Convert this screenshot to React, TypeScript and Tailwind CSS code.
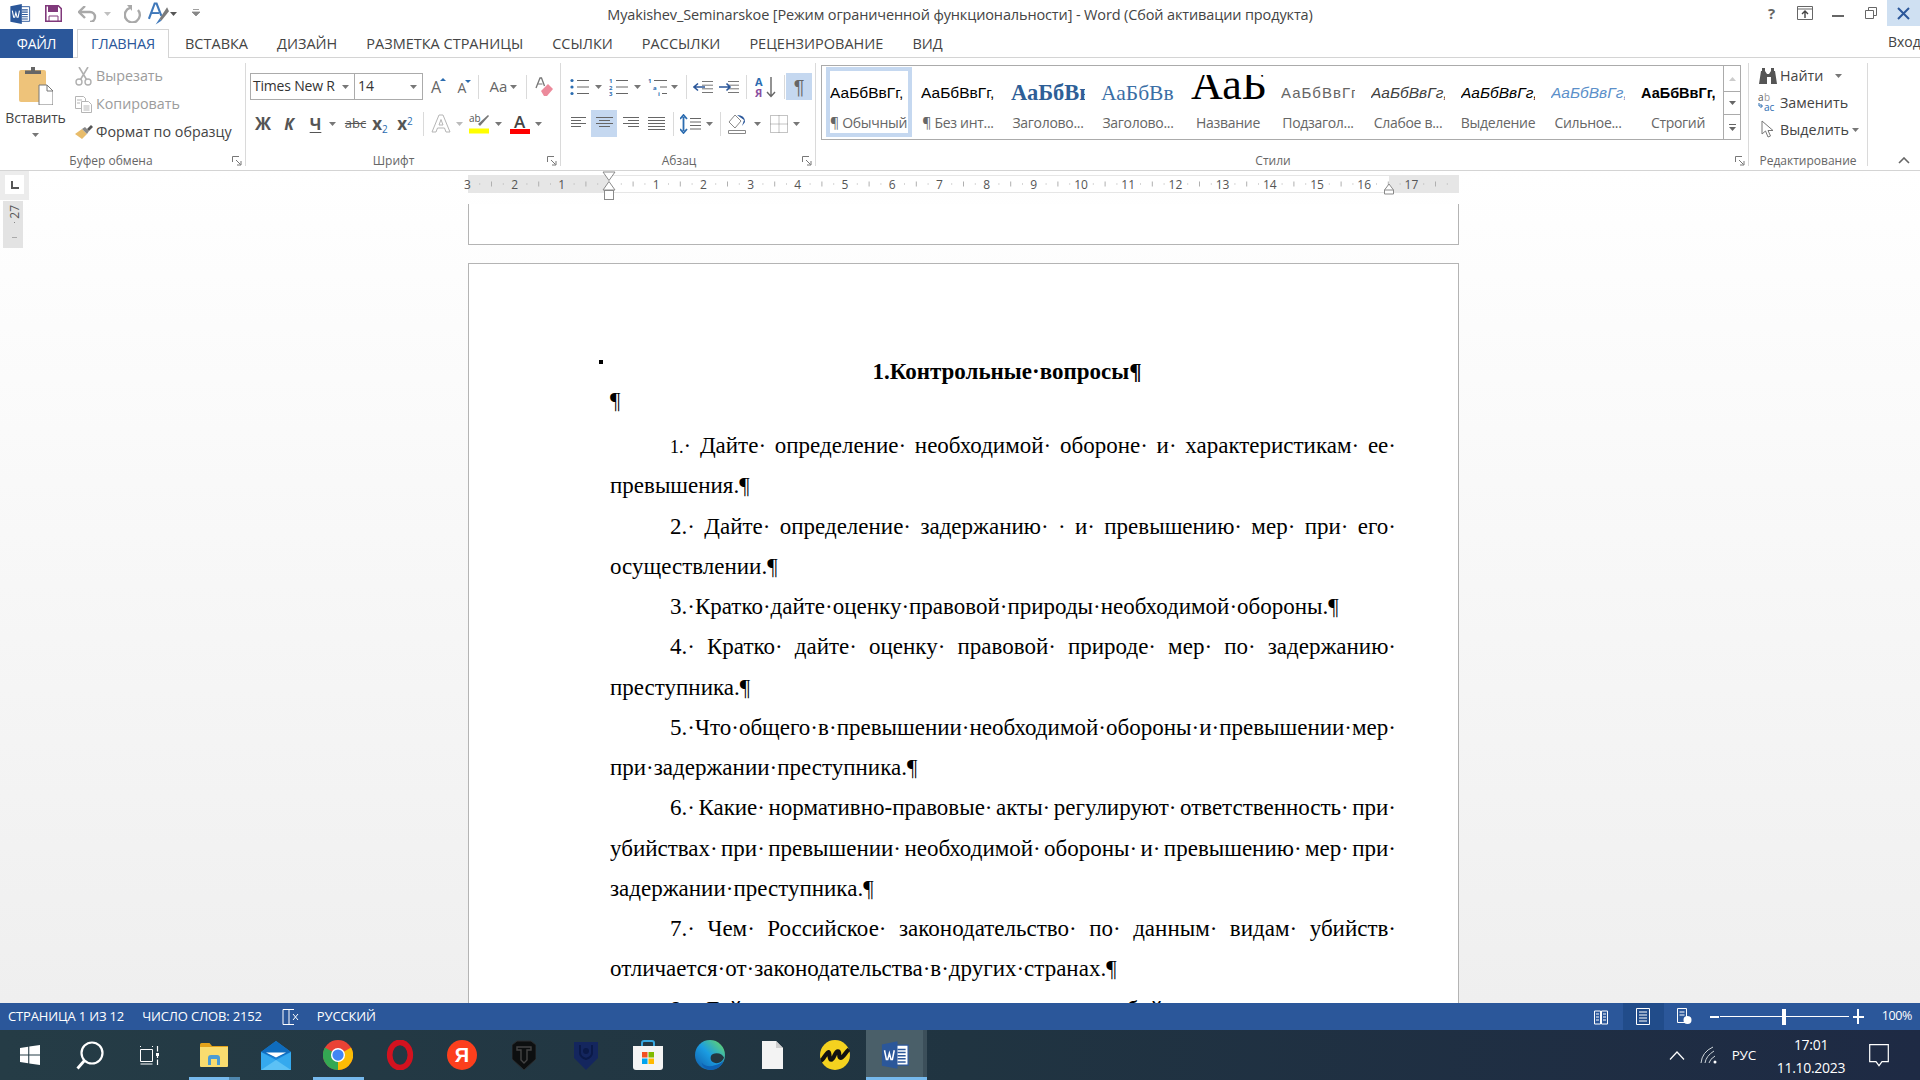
import React from "react";

const sans = "font-['Open_Sans',sans-serif]";

const Caret = ({ c = "#777" }: { c?: string }) => (
  <svg width="7" height="4" viewBox="0 0 7 4" className="shrink-0"><path d="M0 0h7L3.5 4z" fill={c} /></svg>
);
const Sep = ({ w }: { w: number }) => (
  <div className="flex justify-center h-full" style={{ width: w }}><div className="w-px h-[24px] bg-[#dadada] self-center" /></div>
);
const Btn = ({ w, children, on, gap = 6 }: { w: number; children: React.ReactNode; on?: boolean; gap?: number }) => (
  <div className={"flex items-center justify-center h-[27px] shrink-0 " + (on ? "bg-[#c5d8f0]" : "")} style={{ width: w, gap }}>{children}</div>
);
const Launcher = () => (
  <svg width="10" height="10" viewBox="0 0 10 10" className="absolute right-[3px] top-[1px]"><path d="M.5 6V.5H7M4 4l4.5 4.5M9 5v4H5" stroke="#777" fill="none" /></svg>
);
const Label = ({ children, launcher = true }: { children: React.ReactNode; launcher?: boolean }) => (
  <div className={"relative top-[1px] mt-auto h-[12px] leading-[12px] text-center text-[12px] text-[#666] whitespace-nowrap " + (launcher ? "pr-[23px]" : "")}>
    {children}
    {launcher && <Launcher />}
  </div>
);

const WordLogo = ({ s = 22 }: { s?: number }) => (
  <svg width={s} height={s} viewBox="0 0 24 24">
    <path d="M11 4h11.5v16H11z" fill="#fff" stroke="#2b579a" />
    <path d="M14 7.5h6.5M14 10h6.5M14 12.5h6.5M14 15h6.5M14 17.5h6.5" stroke="#2b579a" strokeWidth="1.2" />
    <path d="M1.5 3.5 14 1v22L1.5 20.5z" fill="#2b579a" />
    <path d="M3.6 8.2l1.5 7.4h1.1l1.3-5 1.3 5h1.1l1.5-7.4" stroke="#fff" strokeWidth="1.2" fill="none" />
  </svg>
);

const IconList = {
  Bullets: () => (
    <svg width="20" height="18" viewBox="0 0 20 18"><circle cx="2" cy="2.5" r="1.6" fill="#2b6cb0" /><circle cx="2" cy="9" r="1.6" fill="#2b6cb0" /><circle cx="2" cy="15.5" r="1.6" fill="#2b6cb0" /><path d="M7 2.5h12M7 9h12M7 15.5h12" stroke="#666" /></svg>
  ),
  Numbers: () => (
    <svg width="20" height="18" viewBox="0 0 20 18"><text x="0" y="5" fontSize="6" fill="#2b6cb0" fontWeight="700">1</text><text x="0" y="11.5" fontSize="6" fill="#2b6cb0" fontWeight="700">2</text><text x="0" y="18" fontSize="6" fill="#2b6cb0" fontWeight="700">3</text><path d="M7 2.5h12M7 9h12M7 15.5h12" stroke="#666" /></svg>
  ),
  Multi: () => (
    <svg width="20" height="18" viewBox="0 0 20 18"><text x="0" y="5" fontSize="6" fill="#2b6cb0" fontWeight="700">1</text><text x="5" y="11.5" fontSize="6" fill="#2b6cb0" fontWeight="700">a</text><text x="10" y="18" fontSize="6" fill="#2b6cb0" fontWeight="700">i</text><path d="M6 2.5h13M12 9h7M14 15.5h5" stroke="#666" /></svg>
  ),
};

const IndentIcon = ({ dir }: { dir: "l" | "r" }) => (
  <svg width="20" height="12" viewBox="0 0 20 12">
    <path d="M9 .5h11M9 4.2h11M9 7.8h11M9 11.5h11" stroke="#777" />
    {dir === "l" ? <path d="M1 6h11M5 2.5 1 6l4 3.5" stroke="#2b579a" strokeWidth="1.6" fill="none" /> : <path d="M0 6h11M7.5 2.5 11 6 7.5 9.5" stroke="#2b579a" strokeWidth="1.6" fill="none" />}
  </svg>
);
const Align = ({ rows }: { rows: [number, number][] }) => (
  <svg width="17" height="13" viewBox="0 0 17 13">
    {rows.map(([x, w], i) => <path key={i} d={`M${x} ${i * 3 + .5}h${w}`} stroke="#666" />)}
  </svg>
);

const Tab = ({ children }: { children: React.ReactNode }) => (
  <div className="px-[14.5px] h-[29px] leading-[29px] text-[#444] text-[14.5px] whitespace-nowrap">{children}</div>
);

const StyleItem = ({ sample, label, cls, sel, big }: { sample: string; label: string; cls: string; sel?: boolean; big?: boolean }) => (
  <div className="w-[90px] shrink-0">
    <div className={"h-[70px] border-[4px] mt-[1px] w-[86px] " + (sel ? "ml-[4px] border-[#c5d8f0]" : "ml-[3px] border-transparent")}>
      <div className={sel ? "pr-[4px]" : ""}>
        <div className={"w-[74px] mx-auto overflow-hidden whitespace-nowrap " + (big ? "h-[40px] mt-[4px] leading-[20px] text-center " : "h-[44px] leading-[44px] ") + cls}>{sample}</div>
        <div className="h-[16px] leading-[16px] text-center text-[14px] tracking-[-0.3px] text-[#666] whitespace-nowrap">{label}</div>
      </div>
    </div>
  </div>
);

const Row3 = ({ icon, text, color = "#444", extra, tight }: { icon: React.ReactNode; text: string; color?: string; extra?: React.ReactNode; tight?: boolean }) => (
  <div className={"flex items-center " + (tight ? "h-[27px]" : "h-[28px]")}>
    <div className="w-[25px] flex justify-center shrink-0">{icon}</div>
    <span className="text-[14.3px] whitespace-nowrap" style={{ color }}>{text}</span>
    {extra}
  </div>
);

const Ruler = () => {
  const cm = 47.2, o = 141;
  const nums: React.ReactNode[] = [];
  for (let i = -3; i <= 17; i++) {
    const x = o + i * cm;
    if (i !== 0) nums.push(<text key={"n" + i} x={x} y={13.5} fontSize="12" textAnchor="middle" fill="#555" fontFamily="Open Sans">{Math.abs(i)}</text>);
    for (const [f, h] of [[.25, 1], [.5, 5], [.75, 1]] as const) {
      const tx = x + f * cm;
      if (tx < 991) nums.push(<rect key={"t" + i + f} x={tx} y={9 - h / 2} width="1" height={h} fill="#b0b0b0" />);
    }
  }
  return (
    <svg width="991" height="18" viewBox="0 0 991 18" className="overflow-visible block">
      <rect width="991" height="18" fill="#fff" />
      <path d="M0 .5h991M0 17.5h991" stroke="#e6e6e6" />
      <rect width="141" height="18" fill="#e6e6e6" />
      <rect x="921" width="70" height="18" fill="#e6e6e6" />
      {nums}
      <path d="M135 -3h12l-6 8.5z M135 15h12l-6 -8.5z" fill="#fff" stroke="#8a8a8a" />
      <rect x="136.5" y="15.5" width="9" height="9" fill="#fff" stroke="#8a8a8a" />
      <path d="M916.5 19v-4l4.5-6 4.5 6v4z" fill="#fff" stroke="#8a8a8a" />
      <path d="M916.5 15h9" stroke="#8a8a8a" />
    </svg>
  );
};

type Ln = { t: string; j?: boolean; ind?: boolean; num?: string };
const doc: Ln[] = [
  { t: "· Дайте· определение· необходимой· обороне· и· характеристикам· ее·", j: true, ind: true, num: "1." },
  { t: "превышения.¶" },
  { t: "2.· Дайте· определение· задержанию· · и· превышению· мер· при· его·", j: true, ind: true },
  { t: "осуществлении.¶" },
  { t: "3.·Кратко·дайте·оценку·правовой·природы·необходимой·обороны.¶", ind: true },
  { t: "4.· Кратко· дайте· оценку· правовой· природе· мер· по· задержанию·", j: true, ind: true },
  { t: "преступника.¶" },
  { t: "5.· Что· общего· в· превышении· необходимой· обороны· и· превышении· мер·", j: true, ind: true },
  { t: "при·задержании·преступника.¶" },
  { t: "6.· Какие· нормативно-правовые· акты· регулируют· ответственность· при·", j: true, ind: true },
  { t: "убийствах· при· превышении· необходимой· обороны· и· превышению· мер· при·", j: true },
  { t: "задержании·преступника.¶" },
  { t: "7.· Чем· Российское· законодательство· по· данным· видам· убийств·", j: true, ind: true },
  { t: "отличается·от·законодательства·в·других·странах.¶" },
  { t: "8.· Дайте· сравнительную· характеристику· убийств· при· превышении·", j: true, ind: true },
];

const Circle = ({ children, s = 32 }: { children: React.ReactNode; s?: number }) => (
  <svg width={s} height={s} viewBox="0 0 32 32">{children}</svg>
);

const TaskIcons: { w: number; el: React.ReactNode; line?: "a" | "b" | "c" }[] = [
  { w: 60, el: <svg width="20" height="20" viewBox="0 0 20 20"><path d="M0 3l8.2-1.2v7.8H0zM9.3 1.6 20 0v9.6H9.3zM0 10.6h8.2v7.7L0 17.1zM9.3 10.6H20V20L9.3 18.5z" fill="#fff" /></svg> },
  { w: 60, el: <svg width="28" height="29" viewBox="0 0 28 29"><circle cx="16" cy="12" r="10.5" stroke="#fff" strokeWidth="2.2" fill="none" /><path d="M8.5 19.5 1.5 27.5" stroke="#fff" strokeWidth="2.8" /></svg> },
  { w: 63, el: <svg width="20" height="19" viewBox="0 0 20 19" className="mr-[3px]"><path d="M.5 3.5h12v12H.5zM.5 0v1M12.5 0v1M.5 18h12" stroke="#fff" fill="none" /><path d="M17.5 0v5.5M17.5 7v5M17.5 13.5V19" stroke="#fff" strokeWidth="1.2" /><rect x="16" y="7" width="3" height="3" fill="#fff" /></svg> },
  { w: 62, line: "a", el: <svg width="28" height="24" viewBox="0 0 28 24"><path d="M0 1.5Q0 0 1.5 0h8L12 3h16v2H0z" fill="#e3a21a" /><path d="M0 4h28v19a1 1 0 0 1-1 1H1a1 1 0 0 1-1-1z" fill="#f9dc6f" /><path d="M8 22v-7a3 3 0 0 1 3-3h6a3 3 0 0 1 3 3v7h-3v-6h-6v6z" fill="#4a9bd4" /></svg> },
  { w: 62, el: <svg width="30" height="29" viewBox="0 0 30 29"><path d="M15 0 30 11v18H0V11z" fill="#1a84d6" /><path d="M15 0 30 11 15 17 0 11z" fill="#0f6cbd" /><path d="M5 11.5h20L15 16.5z" fill="#fff" /><path d="M0 11 15 19 30 11v18H0z" fill="#35a9ee" /><path d="M0 29 15 19l15 10z" fill="#5cc1f5" /></svg> },
  { w: 62, line: "b", el: <Circle s={30}><circle cx="16" cy="16" r="16" fill="#e94235" /><path d="M16 16 29.9 8A16 16 0 0 1 16 32z" fill="#fbbc05" /><path d="M16 16V32A16 16 0 0 1 2.1 8z" fill="#34a853" /><circle cx="16" cy="16" r="7.5" fill="#fff" /><circle cx="16" cy="16" r="6" fill="#4285f4" /></Circle> },
  { w: 62, el: <Circle s={30}><ellipse cx="16" cy="16" rx="11" ry="13.5" fill="none" stroke="#d3121f" strokeWidth="6" /></Circle> },
  { w: 62, el: <div className="w-[30px] h-[30px] rounded-full bg-[#fc3f1d] flex items-center justify-center text-white font-bold text-[20px] font-['Liberation_Sans',sans-serif]">Я</div> },
  { w: 62, el: <svg width="24" height="30" viewBox="0 0 24 30"><path d="M5 1h14l5 4v14l-12 11L0 19V5z" fill="#0d0f10" stroke="#2c2f31" /><path d="M5 7h14v3h-4v10l-3 3-3-3V10H5z" fill="none" stroke="#444" strokeWidth="1.4" /></svg> },
  { w: 62, el: <svg width="24" height="30" viewBox="0 0 24 30"><path d="M0 2h24v16L12 30 0 18z" fill="#14265e" /><path d="M6 5v8q0 4 6 6 6-2 6-6V5" stroke="#0b1a48" strokeWidth="2" fill="none" /><circle cx="12" cy="11" r="3" fill="#0b1a48" /></svg> },
  { w: 62, el: <svg width="30" height="30" viewBox="0 0 30 30"><path d="M9 7V3a2 2 0 0 1 2-2h8a2 2 0 0 1 2 2v4" stroke="#37a7e0" strokeWidth="2" fill="none" /><path d="M0 6h30v21a3 3 0 0 1-3 3H3a3 3 0 0 1-3-3z" fill="#f4f4f4" /><path d="M9 12h5.5v5.5H9z" fill="#f25022" /><path d="M15.5 12H21v5.5h-5.5z" fill="#7fba00" /><path d="M9 18.5h5.5V24H9z" fill="#00a4ef" /><path d="M15.5 18.5H21V24h-5.5z" fill="#ffb900" /></svg> },
  { w: 62, el: <Circle s={30}><defs><linearGradient id="edg" x1="0" y1="1" x2="1" y2="0"><stop offset="0" stopColor="#0f5aa8" /><stop offset=".5" stopColor="#1b9de2" /><stop offset="1" stopColor="#6fdc5a" /></linearGradient></defs><circle cx="16" cy="16" r="16" fill="url(#edg)" /><path d="M31 19c-2 5-7 7-11 5-3-1-4-4-3-7 1-2 3-3 6-3 4 0 7 2 8 5z" fill="#24363f" /><path d="M31 21c-2 6-7 11-14 11-5 0-9-3-10-8 3 4 9 5 14 3 4-1 8-3 10-6z" fill="#0f62b4" /></Circle> },
  { w: 62, el: <svg width="21" height="28" viewBox="0 0 21 28"><path d="M0 0h14l7 7v21H0z" fill="#f3f3f3" /><path d="M14 0l7 7h-7z" fill="#cfcfcf" /></svg> },
  { w: 63, el: <Circle s={30}><circle cx="16" cy="16" r="16" fill="#f4d21f" /><path d="M1 22c3-1 5-8 8-9 2 0 0 8 3 8s4-9 7-9 0 7 3 7 5-6 9-9" fill="none" stroke="#111" strokeWidth="4.5" /></Circle> },
];

export default function App() {
  return (
    <div className={"w-[1920px] h-[1080px] flex flex-col overflow-hidden bg-white " + sans}>
      {/* title bar */}
      <div className="h-[29px] grid grid-cols-[1fr_auto_1fr] shrink-0">
        <div className="flex items-center h-[27px] pl-[9px]">
          <WordLogo />
          <svg width="17" height="17" viewBox="0 0 17 17" className="ml-[14px]"><path d="M.8.8h12.5l3 3v12.4H.8z" fill="none" stroke="#80397b" strokeWidth="1.6" /><path d="M3 1h10v6H3z" fill="#80397b" /><path d="M4 11h9v5H4z" fill="#fff" stroke="#80397b" /></svg>
          <svg width="20" height="16" viewBox="0 0 20 16" className="ml-[16px]"><path d="M2 6h10a5 5 0 0 1 0 10" stroke="#a9a9a9" strokeWidth="2.4" fill="none" /><path d="M7 0 1 6l6 6" stroke="#a9a9a9" strokeWidth="2.4" fill="none" /></svg>
          <div className="ml-[6px]"><Caret c="#c0c0c0" /></div>
          <svg width="18" height="18" viewBox="0 0 18 18" className="ml-[13px]"><path d="M6 2.8A7.5 7.5 0 1 0 14 5" stroke="#a9a9a9" strokeWidth="2.4" fill="none" /><path d="M3 0h5v6z" fill="#a9a9a9" /></svg>
          <svg width="21" height="24" viewBox="0 0 22 24" className="ml-[6px]"><path d="M1 17 7 1h2l5 13" stroke="#3f78ba" strokeWidth="2.2" fill="none" /><path d="M3.5 11h8" stroke="#3f78ba" strokeWidth="2" /><path d="M20 5l-8 12 2 2 8-10z" fill="#7a7a7a" /><path d="M12 17l-4 6 6-4z" fill="#3f78ba" /></svg>
          <div className="ml-[1px]"><Caret c="#555" /></div>
          <svg width="8" height="9" viewBox="0 0 8 9" className="ml-[15px]"><path d="M1 .5h6M0 3h8l-4 4z" stroke="#888" strokeWidth=".8" fill="#888" /></svg>
        </div>
        <div className="h-[29px] leading-[29px] text-[14.5px] tracking-[-0.13px] text-[#444] whitespace-nowrap">Myakishev_Seminarskoe [Режим ограниченной функциональности] - Word (Сбой активации продукта)</div>
        <div className="flex justify-end items-start">
          <div className="w-[33px] h-[26px] leading-[26px] text-center text-[15px] font-bold text-[#666]">?</div>
          <div className="w-[33px] h-[26px] flex items-center justify-center"><svg width="16" height="14" viewBox="0 0 16 14"><path d="M.5.5h15v13H.5zM.5 3h15" stroke="#666" fill="none" /><path d="M8 12V5M5 8l3-3 3 3" stroke="#444" strokeWidth="1.4" fill="none" /></svg></div>
          <div className="w-[33px] h-[26px] flex items-center justify-center"><div className="w-[12px] h-[2px] bg-[#666] mt-[6px]" /></div>
          <div className="w-[33px] h-[26px] flex items-center justify-center"><svg width="12" height="12" viewBox="0 0 12 12"><path d="M3.5 3V.5h8v8H9M.5 3.5h8v8h-8z" stroke="#666" fill="none" /></svg></div>
          <div className="w-[33px] h-[26px] bg-[#cfe0f2] flex items-center justify-center"><svg width="13" height="13" viewBox="0 0 13 13"><path d="M1 1l11 11M12 1 1 12" stroke="#2b579a" strokeWidth="2" /></svg></div>
        </div>
      </div>

      {/* tabs */}
      <div className="h-[29px] flex border-b border-[#d4d4d4] shrink-0 relative">
        <div className="w-[73px] h-[29px] bg-[#2b579a] text-white text-[14px] leading-[29px] text-center tracking-[-0.3px]">ФАЙЛ</div>
        <div className="ml-[4px] w-[92px] h-[29px] border border-b-0 border-[#d4d4d4] bg-white text-[#2b579a] text-[14.5px] leading-[27px] text-center tracking-[-0.2px] z-10">ГЛАВНАЯ</div>
        <div className="flex ml-[1.5px]">
          <Tab>ВСТАВКА</Tab>
          <Tab>ДИЗАЙН</Tab>
          <Tab>РАЗМЕТКА СТРАНИЦЫ</Tab>
          <Tab>ССЫЛКИ</Tab>
          <Tab>РАССЫЛКИ</Tab>
          <Tab>РЕЦЕНЗИРОВАНИЕ</Tab>
          <Tab>ВИД</Tab>
        </div>
        <div className="ml-auto w-[32px] h-[28px] leading-[26px] text-[14px] text-[#444] overflow-hidden whitespace-nowrap">Вход</div>
      </div>

      {/* ribbon */}
      <div className="h-[113px] flex border-b border-[#d4d4d4] shrink-0 bg-white">
        {/* clipboard */}
        <div className="w-[246px] h-[103px] mt-[5px] border-r border-[#dadada] flex flex-col shrink-0">
          <div className="flex">
            <div className="w-[71px] flex flex-col items-center shrink-0">
              <svg width="34" height="38" viewBox="0 0 34 38" className="mt-[4px]"><rect x="0" y="3" width="27" height="32" rx="2" fill="#eec37a" /><path d="M6 7V3.5h6V0h4v3.5h6V7z" fill="#666" /><path d="M20 18h8l6 6v14H20z" fill="#fff" stroke="#777" /><path d="M28 18v6h6" fill="none" stroke="#777" /></svg>
              <div className="text-[14px] leading-[20px] text-[#444] mt-[3px] tracking-[-0.2px]">Вставить</div>
              <div className="mt-[5px]"><Caret /></div>
            </div>
            <div className="flex flex-col -mt-[1px]">
              <Row3 color="#9c9c9c" text="Вырезать" icon={<svg width="17" height="19" viewBox="0 0 17 19"><circle cx="4" cy="15" r="3" fill="none" stroke="#b0b0b0" strokeWidth="1.4" /><circle cx="13" cy="15" r="3" fill="none" stroke="#b0b0b0" strokeWidth="1.4" /><path d="M5.5 12.5 13 0M11.5 12.5 4 0" stroke="#b0b0b0" strokeWidth="1.6" /></svg>} />
              <Row3 color="#9c9c9c" text="Копировать" icon={<svg width="17" height="17" viewBox="0 0 17 17"><path d="M.5.5h8l2 2v10H.5z" fill="#fff" stroke="#b5b5b5" /><path d="M6.5 5.5h7l3 3v8h-10z" fill="#fff" stroke="#b5b5b5" /><path d="M2 4h5M2 7h3M8.5 10h6M8.5 12h6M8.5 14h6" stroke="#b5b5b5" /></svg>} />
              <Row3 text="Формат по образцу" icon={<svg width="18" height="14" viewBox="0 0 18 14"><path d="M0 9 7 4l5 5-5 5z" fill="#e8bc6a" /><path d="M7 4l3-2 4 4-2 3z" fill="#888" /><path d="M12 4l4-4 2 2-4 4z" fill="#555" /></svg>} />
            </div>
          </div>
          <Label>Буфер обмена</Label>
        </div>
        {/* font */}
        <div className="w-[315px] h-[103px] mt-[5px] border-r border-[#dadada] flex flex-col shrink-0 pl-[4px] pt-[10px]">
          <div className="flex items-center h-[27px]">
            <div className="w-[105px] h-[27px] border border-[#ababab] flex items-center pl-[2px] pr-[5px] justify-between shrink-0">
              <span className="text-[14px] text-[#333] whitespace-nowrap tracking-[-0.2px] pb-[2px]">Times New R</span><Caret />
            </div>
            <div className="w-[68px] h-[27px] border border-l-0 border-[#ababab] flex items-center pl-[3px] pr-[5px] justify-between shrink-0">
              <span className="text-[14px] text-[#333] pb-[2px]">14</span><Caret />
            </div>
            <Btn w={26}><span className="relative text-[#666] text-[16px] leading-none">A<span className="absolute -top-[1px] -right-[5px] w-0 h-0 border-x-[3px] border-x-transparent border-b-[3px] border-b-[#2b6cb0]" /></span></Btn>
            <Btn w={26}><span className="relative text-[#666] text-[14px] leading-none mt-[3px]">A<span className="absolute -top-[1px] -right-[5px] w-0 h-0 border-x-[3px] border-x-transparent border-t-[3px] border-t-[#2b6cb0]" /></span></Btn>
            <Sep w={8} />
            <Btn w={44} gap={3}><span className="text-[#666] text-[15px]">Aa</span><Caret /></Btn>
            <Sep w={2} />
            <Btn w={33}><svg width="18" height="20" viewBox="0 0 18 20"><path d="M1 11 5 1h1.5l3 8" stroke="#777" strokeWidth="1.3" fill="none" /><path d="M2.5 7h5" stroke="#777" /><path d="M6 14l7-7 5 5-6 7H9z" fill="#ec8a9b" /></svg></Btn>
          </div>
          <div className="flex items-center h-[27px] mt-[10px] text-[#555]">
            <Btn w={26}><span className="font-bold text-[17px] leading-none">Ж</span></Btn>
            <Btn w={26}><span className="font-bold italic text-[16px] leading-none">К</span></Btn>
            <Btn w={42} gap={8}><span className="font-bold text-[16px] leading-none underline underline-offset-2">Ч</span><Caret /></Btn>
            <Btn w={23}><span className="text-[13px] line-through">abc</span></Btn>
            <Btn w={26}><span className="font-bold text-[17px] leading-none">x<sub className="text-[10px] font-normal text-[#2b6cb0]">2</sub></span></Btn>
            <Btn w={24}><span className="font-bold text-[17px] leading-none">x<sup className="text-[10px] font-normal text-[#2b6cb0]">2</sup></span></Btn>
            <Sep w={12} />
            <Btn w={36} gap={5}><svg width="20" height="19" viewBox="0 0 20 19"><path d="M1 18 8 1h4l7 17h-4l-1.5-4h-7L5 18zM8 11h4l-2-5.5z" fill="#fff" stroke="#b5b5b5" /></svg><Caret c="#bbb" /></Btn>
            <Btn w={41} gap={5}><svg width="21" height="21" viewBox="0 0 21 21"><text x="0" y="9" fontSize="10" fill="#555" fontFamily="Open Sans">ab</text><path d="M19 2 9 11l2 2 9-10z" fill="#777" /><rect y="15.5" width="20" height="5" fill="#ffff00" /></svg><Caret /></Btn>
            <Btn w={39} gap={5}><div className="flex flex-col items-center w-[20px]"><span className="text-[17px] leading-[15px] font-semibold text-[#444]">A</span><div className="w-[20px] h-[5px] bg-[#ff0000]" /></div><Caret /></Btn>
          </div>
          <Label>Шрифт</Label>
        </div>
        {/* paragraph */}
        <div className="w-[255px] h-[103px] mt-[5px] border-r border-[#dadada] flex flex-col shrink-0 pl-[5px] pt-[10px]">
          <div className="flex items-center h-[27px]">
            <Btn w={39} gap={5}><IconList.Bullets /><Caret /></Btn>
            <Btn w={39} gap={5}><IconList.Numbers /><Caret /></Btn>
            <Btn w={38} gap={3}><IconList.Multi /><Caret /></Btn>
            <Sep w={8} />
            <Btn w={26}><IndentIcon dir="l" /></Btn>
            <Btn w={26}><IndentIcon dir="r" /></Btn>
            <Sep w={8} />
            <Btn w={32}><svg width="22" height="22" viewBox="0 0 22 22"><text x="0" y="10" fontSize="11" fontWeight="700" fill="#2b6cb0" fontFamily="Open Sans">A</text><text x="0" y="21" fontSize="11" fontWeight="700" fill="#8a4fa0" fontFamily="Open Sans">Я</text><path d="M16 1v19M12 16l4 4.5 4-4.5" stroke="#666" strokeWidth="1.4" fill="none" /></svg></Btn>
            <Sep w={4} />
            <Btn w={26} on><span className="text-[20px] leading-none text-[#666] font-['Liberation_Sans',sans-serif]">¶</span></Btn>
          </div>
          <div className="flex items-center h-[27px] mt-[10px]">
            <Btn w={25}><Align rows={[[1, 15], [1, 10], [1, 15], [1, 10]]} /></Btn>
            <Btn w={26} on><Align rows={[[0, 17], [3, 11], [0, 17], [3, 11]]} /></Btn>
            <Btn w={26}><Align rows={[[1, 16], [6, 11], [1, 16], [6, 11]]} /></Btn>
            <Btn w={26}><svg width="17" height="14" viewBox="0 0 17 14"><path d="M0 .5h17M0 3.5h17M0 6.5h17M0 9.5h17M0 12.5h17" stroke="#666" /></svg></Btn>
            <Sep w={8} />
            <Btn w={39} gap={5}><svg width="21" height="20" viewBox="0 0 21 20"><path d="M3.5 3v14M0 5l3.5-4L7 5M0 15l3.5 4L7 15" stroke="#2b6cb0" strokeWidth="1.8" fill="none" /><path d="M10 4.5h11M10 8h11M10 11.5h11M10 15h11" stroke="#666" /></svg><Caret /></Btn>
            <Sep w={8} />
            <Btn w={41} gap={5}><svg width="21" height="20" viewBox="0 0 21 20"><path d="M7 1 1 8l6 6 6-7zM0.5 16.5h17v3H.5z" fill="#fff" stroke="#888" /><path d="M9 1q8 0 8 7l-3 4 2-6z" fill="#2b579a" /></svg><Caret /></Btn>
            <Btn w={39} gap={5}><svg width="18" height="18" viewBox="0 0 18 18"><path d="M.5.5h17v17H.5z" fill="none" stroke="#888" strokeDasharray="1 1" /><path d="M9 .5v17M.5 9h17" stroke="#888" strokeDasharray="1 1" /></svg><Caret /></Btn>
          </div>
          <Label>Абзац</Label>
        </div>
        {/* styles */}
        <div className="w-[933px] h-[103px] mt-[5px] border-r border-[#dadada] flex flex-col shrink-0 pl-[5px] pt-[2px]">
          <div className="w-[920px] h-[75px] border border-[#ababab] flex">
            <div className="flex-1 flex overflow-hidden">
              <StyleItem sel sample="АаБбВвГг," label="¶ Обычный" cls="text-[15.5px] text-black font-['Liberation_Sans',sans-serif]" />
              <StyleItem sample="АаБбВвГг," label="¶ Без инт..." cls="text-[15.5px] text-black font-['Liberation_Sans',sans-serif]" />
              <StyleItem sample="АаБбВв" label="Заголово..." cls="text-[22.5px] font-bold text-[#2e5f97] font-['Liberation_Serif',serif]" />
              <StyleItem sample="АаБбВв" label="Заголово..." cls="text-[21.5px] text-[#3a6ea5] font-['Liberation_Serif',serif]" />
              <StyleItem big sample="АаБ" label="Название" cls="text-[44px] text-black font-['Liberation_Serif',serif]" />
              <StyleItem sample="АаБбВвГг" label="Подзагол..." cls="text-[15px] tracking-[1px] text-[#666] font-['Liberation_Sans',sans-serif]" />
              <StyleItem sample="АаБбВвГг," label="Слабое в..." cls="text-[15.5px] italic text-[#404040] font-['Liberation_Sans',sans-serif]" />
              <StyleItem sample="АаБбВвГг," label="Выделение" cls="text-[15.5px] italic text-black font-['Liberation_Sans',sans-serif]" />
              <StyleItem sample="АаБбВвГг," label="Сильное..." cls="text-[15.5px] italic text-[#5b8fc9] font-['Liberation_Sans',sans-serif]" />
              <StyleItem sample="АаБбВвГг," label="Строгий" cls="text-[14.5px] font-bold text-black font-['Liberation_Sans',sans-serif]" />
            </div>
            <div className="w-[17px] border-l border-[#ababab] flex flex-col shrink-0">
              <div className="h-[26px] flex items-center justify-center border-b border-[#ababab]"><svg width="7" height="4" viewBox="0 0 7 4"><path d="M0 4h7L3.5 0z" fill="#ccc" /></svg></div>
              <div className="h-[23px] flex items-center justify-center border-b border-[#ababab]"><Caret c="#666" /></div>
              <div className="flex-1 flex flex-col items-center justify-center gap-[2px]"><div className="w-[7px] h-px bg-[#666]" /><Caret c="#666" /></div>
            </div>
          </div>
          <Label>Стили</Label>
        </div>
        {/* editing */}
        <div className="w-[119px] h-[103px] mt-[5px] border-r border-[#dadada] flex flex-col shrink-0">
          <div className="pl-[6px] -mt-[1px]">
            <Row3 tight text="Найти" extra={<div className="ml-[12px]"><Caret /></div>} icon={<svg width="18" height="16" viewBox="0 0 18 16"><path d="M2 3h4l2 3h2l2-3h4l2 13h-6V9H8v7H0z" fill="#555" /><path d="M3 0h3v4H3zM12 0h3v4h-3z" fill="#555" /></svg>} />
            <Row3 tight text="Заменить" icon={<svg width="20" height="19" viewBox="0 0 20 19"><text x="0" y="8" fontSize="10" fill="#555" fontFamily="Open Sans">a</text><text x="6" y="8" fontSize="10" fill="#999" fontFamily="Open Sans">b</text><text x="6" y="18" fontSize="10" fill="#2b6cb0" fontFamily="Open Sans">ac</text><path d="M1 10v3h3M2.5 11l2 2-2 2" stroke="#2b6cb0" fill="none" /></svg>} />
            <Row3 tight text="Выделить" extra={<div className="ml-[3px]"><Caret /></div>} icon={<svg width="14" height="19" viewBox="0 0 14 19"><path d="M1 1v13l3.5-3L7 17l2.5-1L7 10.5h5z" fill="#fff" stroke="#777" /></svg>} />
          </div>
          <Label launcher={false}>Редактирование</Label>
        </div>
        <div className="flex-1 flex justify-end items-end pb-[6px] pr-[10px]">
          <svg width="12" height="7" viewBox="0 0 12 7"><path d="M1 6l5-5 5 5" stroke="#666" strokeWidth="1.6" fill="none" /></svg>
        </div>
      </div>

      {/* document */}
      <div className="flex-1 min-h-0 flex overflow-hidden bg-gradient-to-b from-white to-[#efefef]">
        <div className="w-[468px] shrink-0">
          <div className="w-[29px] h-[29px] bg-[#ececec] pl-[5px] pt-[4px]">
            <div className="w-[19px] h-[19px] bg-white flex items-center justify-center"><svg width="8" height="8" viewBox="0 0 8 8"><path d="M1 0v7h7" stroke="#555" strokeWidth="2" fill="none" /></svg></div>
          </div>
          <div className="ml-[3px] mt-[1px] w-[20px] h-[47px] bg-[#e3e3e3] flex flex-col items-center pt-[4px] pl-[3px]">
            <span className="[writing-mode:vertical-rl] rotate-180 text-[12px] leading-none text-[#555]">27</span>
            <span className="w-px h-px bg-[#888] mt-[3px]" />
            <span className="w-[5px] h-px bg-[#aaa] mt-[14px]" />
          </div>
        </div>
        <div className="w-[991px] shrink-0 font-['Liberation_Serif',serif] text-[23px] text-black">
          <div className="mt-[4px] h-[18px]"><Ruler /></div>
          <div className="mt-[11px] h-[41px] bg-white border border-t-0 border-[#b4b4b4]" />
          <div className="relative mt-[18px] h-[900px] bg-white border border-b-0 border-[#b4b4b4] pl-[141px] pr-[62px] pt-[93px]">
            <div className="absolute left-[130px] top-[96px] w-[4px] h-[4px] bg-black" />
            <div className="h-[29px] leading-[29px] text-center font-bold pl-[8px] whitespace-nowrap">1.Контрольные·вопросы¶</div>
            <div className="h-[29px] leading-[29px]">¶</div>
            <div className="mt-[11px]">
              {doc.map((l, i) => (
                <div key={i} className={"h-[40.25px] leading-[40.25px] overflow-hidden [word-spacing:-0.25em] " + (l.j ? "text-justify [text-align-last:justify] " : "whitespace-nowrap ") + (l.ind ? "indent-[60px]" : "")}>
                  {l.num && <span className="text-[18px]">{l.num}</span>}{l.t}
                </div>
              ))}
            </div>
          </div>
        </div>
      </div>

      {/* status bar */}
      <div className="h-[27px] shrink-0 bg-[#2b579a] text-white text-[13px] tracking-[-0.15px] flex items-center whitespace-nowrap">
        <span className="ml-[8px]">СТРАНИЦА 1 ИЗ 12</span>
        <span className="ml-[18px]">ЧИСЛО СЛОВ: 2152</span>
        <svg width="18" height="18" viewBox="0 0 18 18" className="ml-[20px]"><path d="M1 1.5h6v15H1zM7 1.5h5M7 16.5h5" stroke="#fff" fill="none" /><path d="M11 6l5 6M16 6l-5 6" stroke="#fff" /></svg>
        <span className="ml-[17px]">РУССКИЙ</span>
        <div className="ml-auto flex items-center h-[27px]">
          <svg width="14" height="16" viewBox="0 0 14 16" className="mr-[15px]"><path d="M.5 2h6v13h-6zM7.5 2h6v13h-6zM2 5h3M2 8h3M2 11h3M9 5h3M9 8h3M9 11h3" stroke="#fff" fill="none" /></svg>
          <div className="w-[41px] h-[27px] bg-[#214c8a] flex items-center justify-center"><svg width="14" height="17" viewBox="0 0 14 17"><path d="M.5.5h13v16H.5zM3 4h8M3 7h8M3 10h8M3 13h8" stroke="#fff" fill="none" /></svg></div>
          <svg width="15" height="17" viewBox="0 0 15 17" className="ml-[13px]"><path d="M.5.5h9v14h-9zM2.5 4h5M2.5 7h5" stroke="#fff" fill="none" /><circle cx="10.5" cy="12" r="4" fill="#fff" /></svg>
          <div className="ml-[18px] w-[9px] h-[2px] bg-white" />
          <div className="w-[129px] mx-[1px] h-[1px] bg-white flex justify-center items-center"><div className="w-[4px] h-[16px] bg-white" /></div>
          <div className="relative w-[11px] h-[11px] ml-[3px] flex items-center justify-center"><div className="w-[11px] h-[2px] bg-white" /><div className="absolute w-[2px] h-[15px] bg-white" /></div>
          <span className="ml-[18px] mr-[8px] text-[12.5px] tracking-[-0.4px]">100%</span>
        </div>
      </div>

      {/* taskbar */}
      <div className="h-[50px] shrink-0 bg-gradient-to-r from-[#253c46] via-[#203441] to-[#1e2a44] flex items-stretch">
        {TaskIcons.map((t, i) => (
          <div key={i} className="relative flex items-center justify-center shrink-0" style={{ width: t.w }}>
            {t.el}
            {t.line === "a" && <div className="absolute bottom-0 left-[6px] w-[51px] h-[3px] bg-[#76b9ed]"><div className="ml-auto w-[11px] h-full bg-[#4f87ad]" /></div>}
            {t.line === "b" && <div className="absolute bottom-0 left-[6px] w-[51px] h-[3px] bg-[#76b9ed]" />}
          </div>
        ))}
        <div className="relative w-[61px] shrink-0 bg-[#4a5f69] flex items-center justify-center border-r-[4px] border-[#3c4f5a]">
          <WordLogo s={30} />
          <div className="absolute bottom-0 left-0 -right-[4px] h-[3px] bg-[#76b9ed]" />
        </div>
        <div className="ml-auto flex items-center text-white">
          <svg width="16" height="9" viewBox="0 0 16 9"><path d="M1 8.5 8 1l7 7.5" stroke="#fff" fill="none" strokeWidth="1.2" /></svg>
          <svg width="18" height="18" viewBox="0 0 18 18" className="ml-[15px]"><path d="M1 17Q2 6 13 1M5 17Q6 10 14 5M9 17q1-4 6-7" stroke="#cfd6da" fill="none" /><circle cx="15" cy="16" r="1.5" fill="#fff" /></svg>
          <span className="ml-[14px] text-[13.5px] tracking-[-0.2px]">РУС</span>
          <div className="ml-[15px] w-[80px] text-center text-[14px] tracking-[-0.3px] leading-[23px] pt-[1px]"><div>17:01</div><div>11.10.2023</div></div>
          <svg width="20" height="23" viewBox="0 0 20 23" className="ml-[18px] mr-[31px]"><path d="M.7.7h18.6v17H13l-3 4-3-4H.7z" fill="none" stroke="#fff" strokeWidth="1.2" /></svg>
        </div>
      </div>
    </div>
  );
}
